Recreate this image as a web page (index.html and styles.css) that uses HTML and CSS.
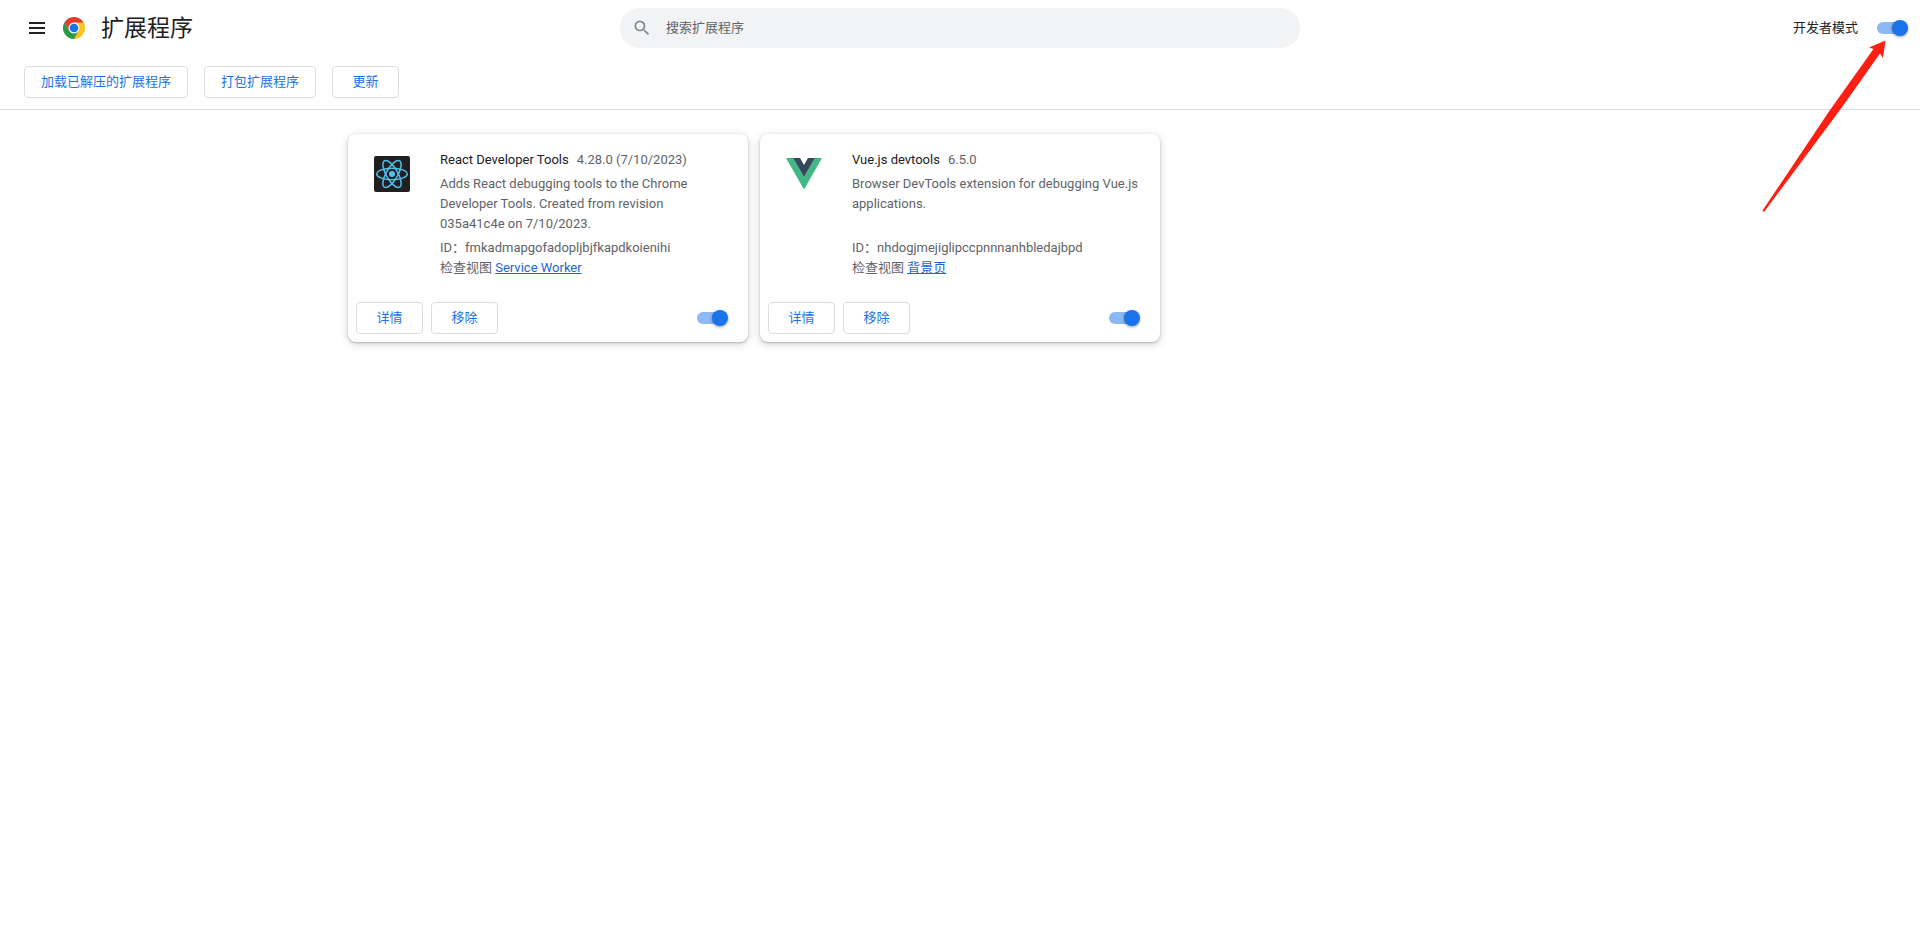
FILE: index.html
```html
<!DOCTYPE html>
<html lang="zh-CN">
<head>
<meta charset="utf-8">
<meta name="viewport" content="width=device-width, initial-scale=1">
<title>扩展程序</title>
<link rel="stylesheet" href="styles.css">
</head>
<body>
<header class="header">
  <div class="toolbar">
    <div class="brand">
      <button class="menu-button" type="button" aria-label="主菜单">
        <svg width="16" height="12" viewBox="0 0 16 12" fill="currentColor" aria-hidden="true"><path d="M0 0h16v2H0zM0 5h16v2H0zM0 10h16v2H0z"/></svg>
      </button>
      <svg class="logo" viewBox="0 0 48 48" aria-hidden="true">
        <path fill="#e33b2e" d="M24 24 3.2 12A24 24 0 0 1 44.8 12z"/>
        <path fill="#fcc31e" d="M24 24V12h20.8A24 24 0 0 1 24 48z"/>
        <path fill="#259b48" d="M3.2 12A24 24 0 0 0 24 48l10.4-18L24 24l-10.4 6z"/>
        <path fill="#e33b2e" d="M3.2 12 13.6 30 24 24V12z"/>
        <circle cx="24" cy="24" r="12" fill="#fff"/>
        <circle cx="24" cy="24" r="9.5" fill="#1a73e8"/>
      </svg>
      <h1 class="title">扩展程序</h1>
    </div>
    <label class="search">
      <svg class="search-icon" viewBox="0 0 24 24" fill="currentColor" aria-hidden="true"><path d="M15.5 14h-.79l-.28-.27A6.471 6.471 0 0 0 16 9.5 6.5 6.5 0 1 0 9.5 16c1.61 0 3.09-.59 4.23-1.57l.27.28v.79l5 4.99L20.49 19l-4.99-5zm-6 0C7.01 14 5 11.99 5 9.5S7.01 5 9.5 5 14 7.01 14 9.5 11.99 14 9.5 14z"/></svg>
      <input class="search-input" type="search" placeholder="搜索扩展程序" aria-label="搜索扩展程序">
    </label>
    <div class="dev-mode">
      <label for="dev-mode">开发者模式</label>
      <input class="toggle" id="dev-mode" type="checkbox" role="switch" checked>
    </div>
  </div>
  <div class="actions">
    <button class="button" type="button">加载已解压的扩展程序</button>
    <button class="button" type="button">打包扩展程序</button>
    <button class="button" type="button">更新</button>
  </div>
</header>
<main class="cards">
  <article class="card">
    <div class="card-main">
      <svg class="card-icon" viewBox="0 0 36 36" aria-hidden="true">
        <rect width="36" height="36" rx="2" fill="#202020"/>
        <g fill="none" stroke="#53c1ee" stroke-width="1.5">
          <ellipse cx="18" cy="18" rx="15.2" ry="5.8"/>
          <ellipse cx="18" cy="18" rx="15.2" ry="5.8" transform="rotate(60 18 18)"/>
          <ellipse cx="18" cy="18" rx="15.2" ry="5.8" transform="rotate(120 18 18)"/>
        </g>
        <circle cx="18" cy="18" r="3" fill="#53c1ee"/>
      </svg>
      <div class="card-text">
        <div class="card-heading"><h2 class="card-name">React Developer Tools</h2><span>4.28.0 (7/10/2023)</span></div>
        <p class="description">Adds React debugging tools to the Chrome Developer Tools. Created from revision 035a41c4e on 7/10/2023.</p>
        <div>ID：fmkadmapgofadopljbjfkapdkoienihi</div>
        <div>检查视图 <a class="link" href="#">Service Worker</a></div>
      </div>
    </div>
    <div class="card-actions">
      <button class="button" type="button">详情</button>
      <button class="button" type="button">移除</button>
      <input class="toggle" type="checkbox" role="switch" aria-label="React Developer Tools" checked>
    </div>
  </article>
  <article class="card">
    <div class="card-main">
      <svg class="card-icon" viewBox="0 0 36 36" aria-hidden="true">
        <path fill="#41b883" d="M0 2h7l11 19L29 2h7L18 33.5z"/>
        <path fill="#35495e" d="M7 2h7l4 7 4-7h7L18 21z"/>
      </svg>
      <div class="card-text">
        <div class="card-heading"><h2 class="card-name">Vue.js devtools</h2><span>6.5.0</span></div>
        <p class="description">Browser DevTools extension for debugging Vue.js applications.</p>
        <div>ID：nhdogjmejiglipccpnnnanhbledajbpd</div>
        <div>检查视图 <a class="link" href="#">背景页</a></div>
      </div>
    </div>
    <div class="card-actions">
      <button class="button" type="button">详情</button>
      <button class="button" type="button">移除</button>
      <input class="toggle" type="checkbox" role="switch" aria-label="Vue.js devtools" checked>
    </div>
  </article>
</main>
<svg class="pointer" viewBox="0 0 126 174" aria-hidden="true"><path fill="#ff1f12" d="M123.5 1.5 107 8.5l4.5 1.5L68 71 .5 171.5l1.5 1.5L79 69.5 118 14.5l3 4.5z"/></svg>
</body>
</html>
```
FILE: styles.css
```css
* {
  box-sizing: border-box;
}

body {
  margin: 0;
  background: #fff;
  color: #202124;
  font: 13px/20px Roboto, "Noto Sans CJK SC", sans-serif;
  position: relative;
}

h1, h2, p {
  margin: 0;
  font-weight: 400;
}

.header {
  border-bottom: 1px solid #dadce0;
}

.toolbar {
  display: grid;
  grid-template-columns: 1fr minmax(0, 680px) 1fr;
  align-items: center;
  height: 56px;
}

.brand {
  display: flex;
  align-items: center;
  padding-left: 21px;
}

.menu-button {
  display: grid;
  place-items: center;
  width: 32px;
  height: 32px;
  padding: 0;
  border: 0;
  background: none;
  color: #202124;
}

.logo {
  width: 22px;
  height: 22px;
  margin: 0 16px 0 10px;
}

.title {
  padding-top: 2px;
  font-size: 23px;
  line-height: 32px;
}

.search {
  display: flex;
  align-items: center;
  gap: 14px;
  height: 40px;
  padding: 0 12px;
  border-radius: 20px;
  background: #f1f3f4;
}

.search-icon {
  width: 20px;
  height: 20px;
  color: #80868b;
}

.search-input {
  flex: 1;
  min-width: 0;
  padding: 0;
  border: 0;
  outline: 0;
  background: none;
  color: inherit;
  font: inherit;
}

.search-input::placeholder {
  color: #5f6368;
}

.dev-mode {
  display: flex;
  align-items: center;
  justify-content: flex-end;
  gap: 19px;
  padding-right: 12px;
}

.toggle {
  appearance: none;
  position: relative;
  width: 31px;
  height: 16px;
  margin: 0;
}

.toggle::before {
  content: "";
  position: absolute;
  top: 2px;
  left: 0;
  width: 28px;
  height: 12px;
  border-radius: 6px;
  background: #8cb8f3;
}

.toggle::after {
  content: "";
  position: absolute;
  top: 0;
  right: 0;
  width: 16px;
  height: 16px;
  border-radius: 50%;
  background: #1a73e8;
  box-shadow: 0 1px 3px rgba(0, 0, 0, 0.4);
}

.actions {
  display: flex;
  gap: 16px;
  padding: 10px 24px 11px;
}

.button {
  min-width: 67px;
  height: 32px;
  padding: 0 16px;
  border: 1px solid #dadce0;
  border-radius: 4px;
  background: #fff;
  color: #1a73e8;
  font: inherit;
}

.cards {
  display: grid;
  grid-template-columns: repeat(3, 400px);
  justify-content: center;
  gap: 12px;
  padding: 24px;
}

.card {
  padding: 16px 20px 8px 8px;
  border-radius: 8px;
  background: #fff;
  color: #5f6368;
  box-shadow: 0 1px 2px rgba(60, 64, 67, 0.3), 0 2px 6px 2px rgba(60, 64, 67, 0.15);
}

.card-main {
  display: flex;
  gap: 30px;
  padding-left: 18px;
}

.card-icon {
  flex: none;
  width: 36px;
  height: 36px;
  margin-top: 6px;
}

.card-heading {
  display: flex;
  gap: 8px;
}

.card-name {
  color: #202124;
  font-size: 13px;
}

.description {
  min-height: 60px;
  margin: 4px 0;
}

.link {
  color: #1967d2;
}

.card-actions {
  display: flex;
  align-items: center;
  gap: 8px;
  margin-top: 24px;
}

.card-actions .toggle {
  margin-left: auto;
}

.pointer {
  position: absolute;
  top: 39px;
  right: 32px;
  width: 126px;
  height: 174px;
  pointer-events: none;
}
```
